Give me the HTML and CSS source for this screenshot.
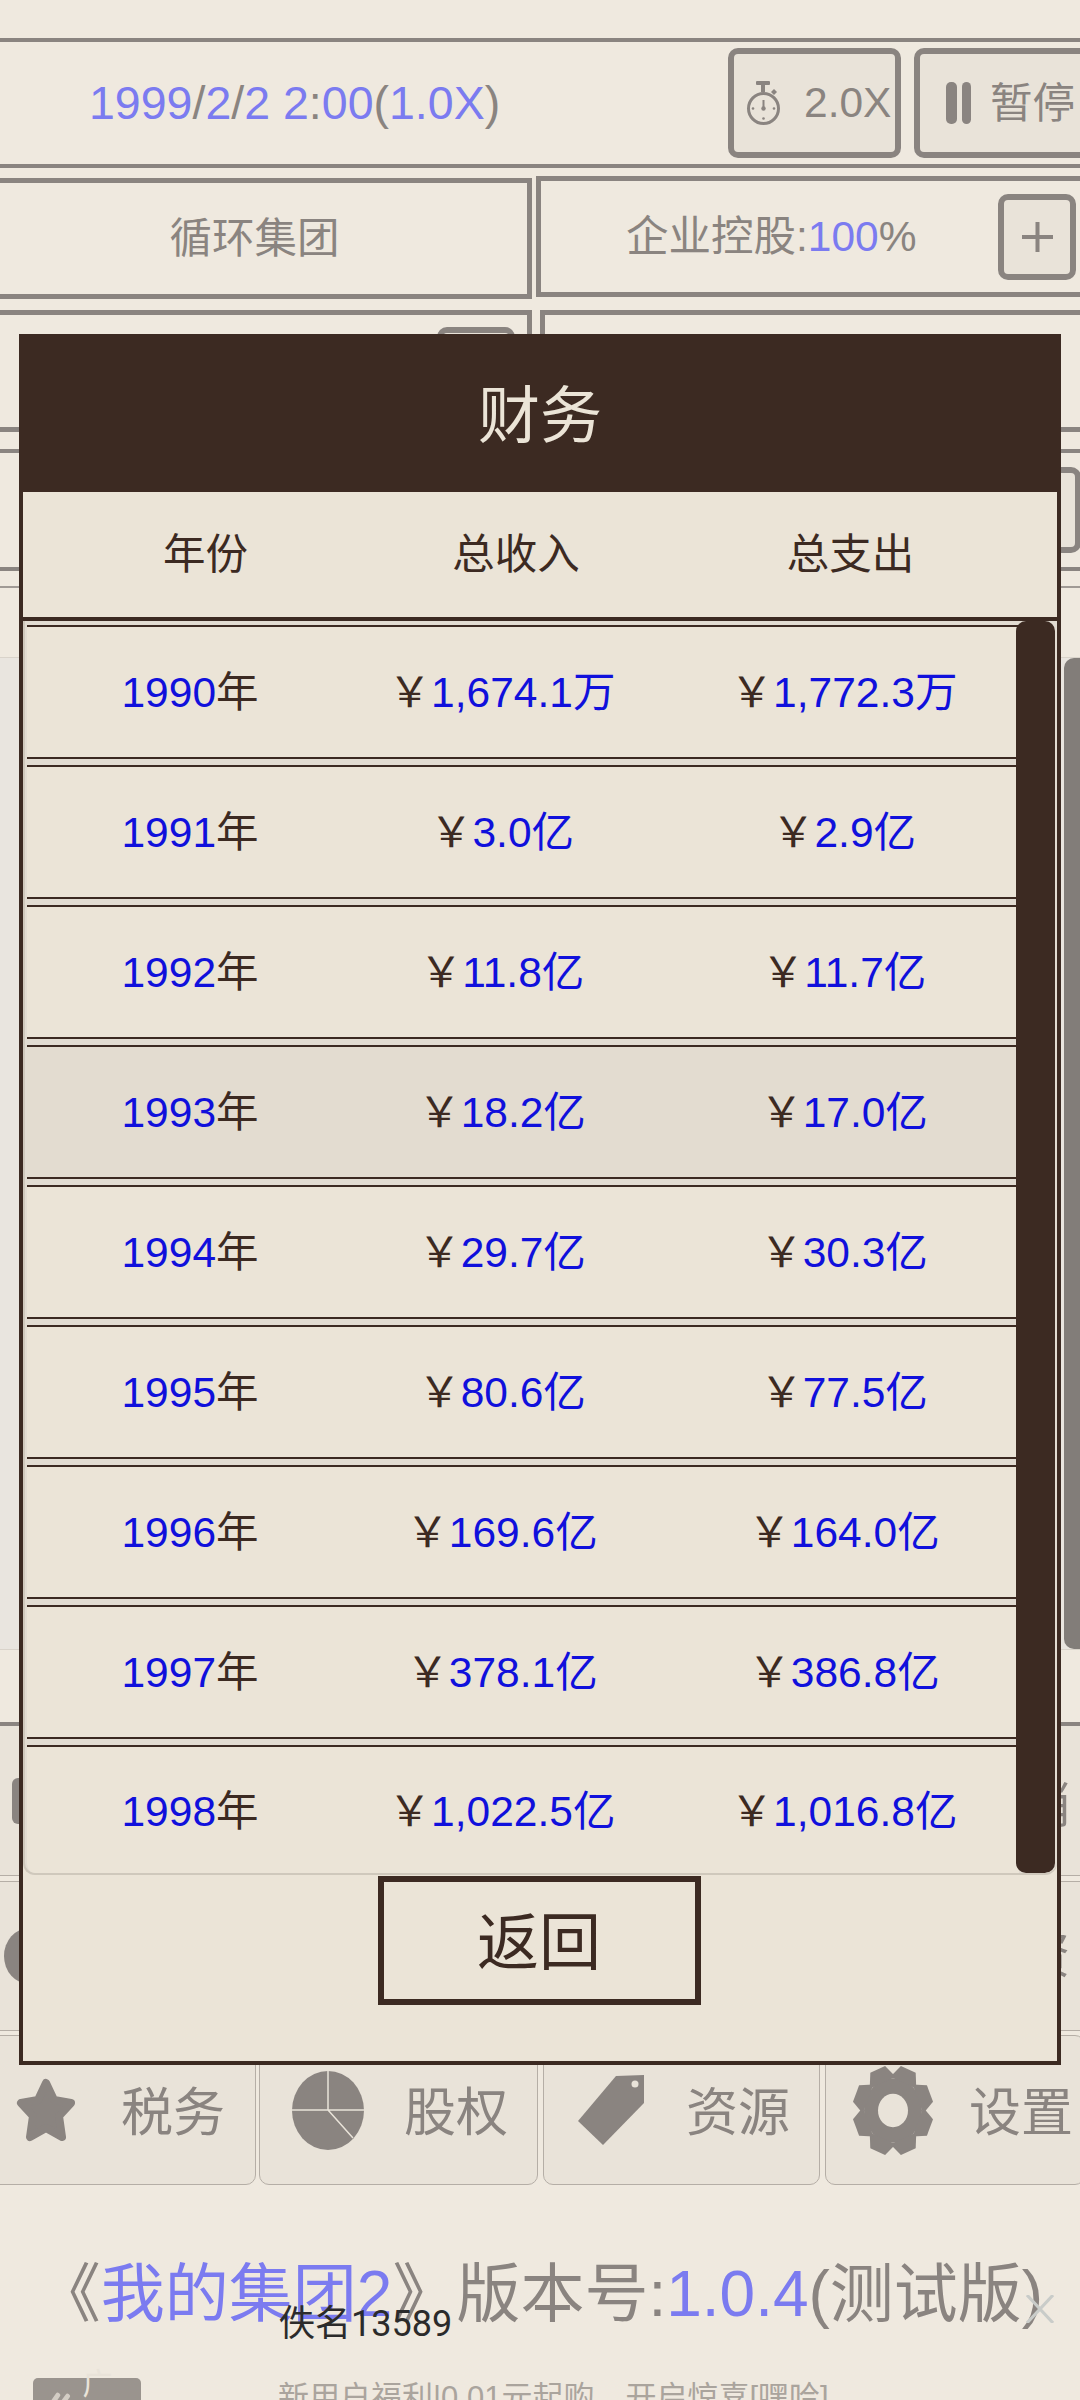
FILE: index.html
```html
<!DOCTYPE html>
<html lang="zh-CN">
<head>
<meta charset="utf-8">
<title>我的集团2</title>
<link rel="stylesheet" href="styles.css">
</head>
<body>
<div class="page">
  <header class="clock">
    <div class="clock-text"><b>1999</b>/<b>2</b>/<b>2</b> <b>2</b>:<b>00</b>(<b>1.0X</b>)</div>
    <div class="clock-tools">
      <div class="tool tool-speed">
        <svg class="watch" viewBox="0 0 33 44"><rect x="9" y="0" width="14" height="4" rx="1"/><rect x="14" y="3" width="4" height="8"/><path d="M27 8l3 3-3 3-3-3z"/><ellipse class="watch-ring" cx="16.500" cy="27.500" rx="15" ry="15"/><rect x="15.500" y="19" width="2" height="9"/><circle cx="16.500" cy="27.500" r="2.200"/><circle cx="6" cy="27.500" r="1.300"/><circle cx="27" cy="27.500" r="1.300"/><circle cx="16.500" cy="37.500" r="1.300"/></svg>
        <span>2.0X</span>
      </div>
      <div class="tool tool-pause">
        <svg class="pause" viewBox="0 0 25 42"><rect x="0" y="0" width="11" height="42" rx="5"/><rect x="16" y="0" width="9" height="42" rx="4.500"/></svg>
        <span class="pause-label">暂停</span>
      </div>
    </div>
  </header>

  <section class="split split-first">
    <div class="cell cell-left cell-company">循环集团</div>
    <div class="cell cell-right cell-share">
      <span class="share-text">企业控股:<b>100</b>%</span>
      <span class="square"><svg class="plus" viewBox="0 0 31 30"><rect x="0" y="13" width="31" height="4"/><rect x="13.500" y="0" width="4" height="30"/></svg></span>
    </div>
  </section>

  <section class="split split-second">
    <div class="cell cell-left cell-wide-btn"><span class="square square-low"></span></div>
    <div class="cell cell-right cell-offset"></div>
  </section>

  <section class="wide-row"><span class="square square-mid"></span></section>
  <section class="thin-row"></section>

  <section class="scroll-block"><div class="thumb"></div></section>

  <section class="list-row">
    <span class="list-pic"></span>
    <span class="list-label">营销</span>
  </section>
  <section class="list-row list-row-second">
    <span class="list-disc"></span>
    <span class="list-label list-label-up">投资</span>
  </section>

  <nav class="nav">
    <div class="nav-card nav-tax">
      <svg class="icon-star" viewBox="0 0 60 64"><polygon points="30,5 38,22 55,25 43,38 46,59 30,50 14,59 17,38 5,25 22,22"/></svg>
      <span>税务</span>
    </div>
    <div class="nav-card nav-equity">
      <svg class="icon-pie" viewBox="0 0 72 79"><ellipse cx="36" cy="39.500" rx="36" ry="39.500"/><path d="M36 0V39M0 39H72M36 39L61 67"/></svg>
      <span>股权</span>
    </div>
    <div class="nav-card nav-res">
      <svg class="icon-tag" viewBox="0 0 66 70"><polygon points="66,0 38,1 0,46 25,70 66,28"/><circle cx="57" cy="9" r="3.500"/></svg>
      <span>资源</span>
    </div>
    <div class="nav-card nav-set">
      <svg class="icon-gear" viewBox="-40 -40 80 80" preserveAspectRatio="none">
        <circle r="29"/>
        <polygon points="-8,-40 8,-40 14,-27 -14,-27" transform="rotate(22.500)"/>
        <polygon points="-8,-40 8,-40 14,-27 -14,-27" transform="rotate(67.500)"/>
        <polygon points="-8,-40 8,-40 14,-27 -14,-27" transform="rotate(112.500)"/>
        <polygon points="-8,-40 8,-40 14,-27 -14,-27" transform="rotate(157.500)"/>
        <polygon points="-8,-40 8,-40 14,-27 -14,-27" transform="rotate(202.500)"/>
        <polygon points="-8,-40 8,-40 14,-27 -14,-27" transform="rotate(247.500)"/>
        <polygon points="-8,-40 8,-40 14,-27 -14,-27" transform="rotate(292.500)"/>
        <polygon points="-8,-40 8,-40 14,-27 -14,-27" transform="rotate(337.500)"/>
        <circle class="gear-hole" r="15"/>
      </svg>
      <span>设置</span>
    </div>
  </nav>

  <div class="version">《<b>我的集团2</b>》版本号:<b>1.0.4</b>(测试版)</div>

  <div class="ad">
    <span class="ad-badge">
      <svg class="ad-mark" viewBox="0 0 24 24"><path d="M2 14L9 4M8 20L19 5M16 22L23 12"/></svg>
      <span>广告</span>
    </span>
    <span class="ad-text">新用户福利|0.01元起购，开启惊喜[嘿哈]</span>
  </div>

  <div class="author">佚名13589</div>
  <svg class="ad-close" viewBox="0 0 28 28"><path d="M1 0L27 28M27 0L1 28"/></svg>

  <div class="modal">
    <div class="modal-title">财务</div>
    <div class="col-head">
      <span>年份</span><span>总收入</span><span>总支出</span>
    </div>
    <div class="list">
      <div class="fin-row"><span class="fin-year"><b>1990</b>年</span><span class="fin-val"><i>￥</i><b>1,674.1万</b></span><span class="fin-val"><i>￥</i><b>1,772.3万</b></span></div>
      <div class="fin-row"><span class="fin-year"><b>1991</b>年</span><span class="fin-val"><i>￥</i><b>3.0亿</b></span><span class="fin-val"><i>￥</i><b>2.9亿</b></span></div>
      <div class="fin-row"><span class="fin-year"><b>1992</b>年</span><span class="fin-val"><i>￥</i><b>11.8亿</b></span><span class="fin-val"><i>￥</i><b>11.7亿</b></span></div>
      <div class="fin-row fin-row-active"><span class="fin-year"><b>1993</b>年</span><span class="fin-val"><i>￥</i><b>18.2亿</b></span><span class="fin-val"><i>￥</i><b>17.0亿</b></span></div>
      <div class="fin-row"><span class="fin-year"><b>1994</b>年</span><span class="fin-val"><i>￥</i><b>29.7亿</b></span><span class="fin-val"><i>￥</i><b>30.3亿</b></span></div>
      <div class="fin-row"><span class="fin-year"><b>1995</b>年</span><span class="fin-val"><i>￥</i><b>80.6亿</b></span><span class="fin-val"><i>￥</i><b>77.5亿</b></span></div>
      <div class="fin-row"><span class="fin-year"><b>1996</b>年</span><span class="fin-val"><i>￥</i><b>169.6亿</b></span><span class="fin-val"><i>￥</i><b>164.0亿</b></span></div>
      <div class="fin-row"><span class="fin-year"><b>1997</b>年</span><span class="fin-val"><i>￥</i><b>378.1亿</b></span><span class="fin-val"><i>￥</i><b>386.8亿</b></span></div>
      <div class="fin-row fin-row-last"><span class="fin-year"><b>1998</b>年</span><span class="fin-val"><i>￥</i><b>1,022.5亿</b></span><span class="fin-val"><i>￥</i><b>1,016.8亿</b></span></div>
      <div class="list-bar"></div>
    </div>
    <div class="modal-foot"><button class="back" type="button">返回</button></div>
  </div>
</div>
</body>
</html>
```

FILE: styles.css
```css
html, body {
  margin: 0;
  padding: 0;
  background: #efe9df;
}

.page {
  position: relative;
  width: 1080px;
  height: 2400px;
  overflow: hidden;
  padding-top: 38px;
  box-sizing: border-box;
  background: #efe9df;
  color: #8a8480;
  font-family: "Liberation Sans", "Noto Sans CJK SC", sans-serif;
  font-size: 42.500px;
}

b {
  font-weight: 400;
  color: #7b7bf0;
}

/* top clock bar */
.clock {
  display: flex;
  align-items: center;
  height: 130px;
  box-sizing: border-box;
  margin-left: -6px;
  padding-left: 95px;
  border-top: 4px solid #8a8480;
  border-bottom: 4px solid #8a8480;
}

.clock-text {
  font-size: 46.500px;
}

.clock-tools {
  display: flex;
  gap: 13px;
  margin-left: auto;
  margin-right: -10px;
}

.tool {
  display: flex;
  align-items: center;
  box-sizing: border-box;
  height: 110px;
  border: 6px solid #8a8480;
  border-radius: 10px;
  background: #e9e3d9;
}

.tool-speed {
  width: 173px;
  padding-left: 13px;
  gap: 24px;
}

.tool-pause {
  width: 176px;
  padding-left: 26px;
  gap: 19px;
}

.pause-label {
  padding-bottom: 8px;
}

.watch {
  width: 33px;
  height: 44px;
  fill: #8a8480;
}

.watch-ring {
  fill: none;
  stroke: #8a8480;
  stroke-width: 3;
}

.pause {
  width: 25px;
  height: 42px;
  fill: #8a8480;
}

/* company rows */
.split {
  display: grid;
  grid-template-columns: 536px 1fr;
  align-items: start;
  margin-left: -6px;
  margin-right: -6px;
}

.split-first {
  margin-top: 8px;
  height: 123px;
}

.split-second {
  margin-top: 11px;
  height: 122px;
}

.cell {
  display: flex;
  align-items: center;
  box-sizing: border-box;
  border: 5px solid #8a8480;
}

.cell-left {
  width: 538px;
}

.cell-company {
  justify-content: center;
  height: 121px;
  margin-top: 2px;
  padding-right: 17px;
  padding-bottom: 8px;
}

.cell-share {
  height: 121px;
  margin-left: 6px;
  padding-left: 85px;
}

.share-text {
  width: 372px;
  padding-bottom: 8px;
}

.square {
  display: flex;
  align-items: center;
  justify-content: center;
  box-sizing: border-box;
  width: 78px;
  height: 86px;
  border: 6px solid #8a8480;
  border-radius: 10px;
  background: #e9e3d9;
}

.plus {
  width: 31px;
  height: 30px;
  fill: #8a8480;
}

.cell-wide-btn {
  height: 122px;
  align-items: flex-start;
  justify-content: flex-end;
  padding-top: 12px;
  padding-right: 12px;
}

.square-low {
  height: 80px;
}

.cell-offset {
  height: 122px;
  margin-left: 10px;
}

.wide-row {
  display: flex;
  justify-content: flex-end;
  align-items: center;
  box-sizing: border-box;
  height: 122px;
  margin: 17px -6px 0;
  padding-right: 5px;
  border-top: 4px solid #8a8480;
  border-bottom: 4px solid #8a8480;
}

.thin-row {
  height: 71px;
  margin-top: 15px;
  border-top: 2px solid #a09a95;
  box-sizing: border-box;
}

/* big list area behind the dialog */
.scroll-block {
  display: flex;
  justify-content: flex-end;
  box-sizing: border-box;
  height: 993px;
  border-top: 1px solid #d9d3ca;
  border-bottom: 1px solid #d9d3ca;
  background: #e9e5df;
}

.thumb {
  width: 16px;
  border-radius: 10px 0 0 10px;
  background: #827d79;
}

.list-row {
  display: flex;
  align-items: center;
  justify-content: space-between;
  box-sizing: border-box;
  height: 154px;
  margin-top: 72px;
  padding: 0 10px 0 12px;
  border-top: 4px solid #8a8480;
  border-bottom: 1px solid #b5aea6;
  background: #e9e3d9;
  font-size: 50px;
}

.list-row-second {
  height: 150px;
  margin-top: 5px;
  padding-left: 4px;
  border-top: 1px solid #b5aea6;
}

.list-pic {
  width: 40px;
  height: 46px;
  border-radius: 6px;
  background: #8a8480;
}

.list-disc {
  width: 50px;
  height: 56px;
  border-radius: 50%;
  background: #8a8480;
}

.list-label-up {
  padding-bottom: 10px;
}

/* bottom nav */
.nav {
  display: grid;
  grid-template-columns: 269px 284px 282px 265px;
  height: 150px;
  margin-top: 4px;
  margin-left: -10px;
  font-size: 52px;
}

.nav-card {
  display: flex;
  align-items: center;
  box-sizing: border-box;
  margin-right: 5px;
  border: 1.500px solid #b5aea6;
  border-radius: 10px;
  background: #e9e3d9;
}

.nav-card span {
  padding-bottom: 4px;
  white-space: nowrap;
}

.nav-tax {
  margin-right: 3px;
  padding-left: 25px;
  gap: 45px;
}

.nav-equity {
  padding-left: 32px;
  gap: 40px;
}

.nav-res {
  padding-left: 34px;
  gap: 42px;
}

.nav-set {
  padding-left: 27px;
  gap: 36px;
}

.icon-star {
  width: 60px;
  height: 64px;
  fill: #8a8480;
  stroke: #8a8480;
  stroke-width: 8;
  stroke-linejoin: round;
}

.icon-pie {
  width: 72px;
  height: 79px;
  fill: #8a8480;
}

.icon-pie path {
  fill: none;
  stroke: #e9e3d9;
  stroke-width: 1.500;
}

.icon-tag {
  width: 66px;
  height: 70px;
  fill: #8a8480;
}

.icon-tag circle {
  fill: #e9e3d9;
}

.icon-gear {
  width: 80px;
  height: 89px;
  fill: #8a8480;
}

.icon-gear .gear-hole {
  fill: #e9e3d9;
}

/* version + ad */
.version {
  height: 80px;
  margin-top: 69px;
  line-height: 80px;
  font-size: 64px;
  text-align: center;
  white-space: nowrap;
}

.ad {
  display: flex;
  align-items: flex-start;
  margin-top: 44px;
  padding-left: 33px;
}

.ad-badge {
  display: flex;
  align-items: center;
  gap: 10px;
  box-sizing: border-box;
  width: 108px;
  height: 50px;
  padding-left: 16px;
  border-radius: 5px;
  background: #9a948e;
  color: #e9e3d9;
  font-size: 30px;
}

.ad-mark {
  width: 24px;
  height: 24px;
  fill: none;
  stroke: #d3cdc4;
  stroke-width: 5;
  stroke-linecap: round;
}

.ad-text {
  margin-left: 137px;
  color: #aaa49d;
  font-size: 31px;
  line-height: 40px;
  white-space: nowrap;
}

/* overlays */
.author {
  position: absolute;
  left: 279px;
  top: 2302px;
  color: #2b2b2b;
  font-family: Roboto, "Noto Sans CJK SC", sans-serif;
  font-size: 36px;
  line-height: 44px;
  white-space: nowrap;
}

.ad-close {
  position: absolute;
  left: 1026px;
  top: 2295px;
  width: 28px;
  height: 28px;
  fill: none;
  stroke: #c9ccc9;
  stroke-width: 3;
}

/* dialog */
.modal {
  position: absolute;
  left: 19px;
  top: 334px;
  box-sizing: border-box;
  width: 1042px;
  height: 1731px;
  border: 4px solid #3c2a22;
  background: #ebe4d7;
  color: #3c2a22;
}

.modal-title {
  display: flex;
  align-items: center;
  justify-content: center;
  box-sizing: border-box;
  height: 154px;
  padding-bottom: 9px;
  background: #3c2a22;
  color: #ebe4d7;
  font-size: 62px;
}

.col-head {
  display: grid;
  grid-template-columns: 365px 256px 1fr;
  align-items: center;
  box-sizing: border-box;
  height: 129px;
  padding-bottom: 8px;
  border-bottom: 4px solid #3c2a22;
  text-align: center;
}

.list {
  position: relative;
  box-sizing: border-box;
  height: 1254px;
  padding: 4px 0 0 2px;
  border-left: 2px solid #cfc8bc;
  border-bottom: 2px solid #cfc8bc;
  border-radius: 0 0 12px 12px;
  background: #e2dcd2;
  overflow: hidden;
}

.fin-row {
  display: grid;
  grid-template-columns: 326px 298px 386px;
  align-items: center;
  box-sizing: border-box;
  width: 992px;
  height: 134px;
  margin-bottom: 6px;
  padding-bottom: 8px;
  border-top: 2px solid #3c2a22;
  border-bottom: 2px solid #3c2a22;
  background: #ebe4d7;
  text-align: center;
  white-space: nowrap;
}

.fin-row-active {
  background: #e3dcd0;
}

.fin-row-last {
  height: 130px;
  margin-bottom: 0;
  border-bottom: 0;
  padding-top: 2px;
  padding-bottom: 10px;
  border-radius: 0 0 0 12px;
}

.fin-row b {
  color: #1010dc;
}

.fin-row i {
  font-style: normal;
}

.list-bar {
  position: absolute;
  top: 0;
  right: 2px;
  bottom: 0;
  width: 39px;
  border-radius: 10px;
  background: #3c2a22;
}

.modal-foot {
  display: flex;
  justify-content: center;
  padding: 1px 2px 0 0;
}

.back {
  box-sizing: border-box;
  width: 323px;
  height: 129px;
  padding: 0 0 6px;
  border: 6px solid #3c2a22;
  background: #ebe4d7;
  color: #3c2a22;
  font-family: inherit;
  font-size: 62px;
}
```
